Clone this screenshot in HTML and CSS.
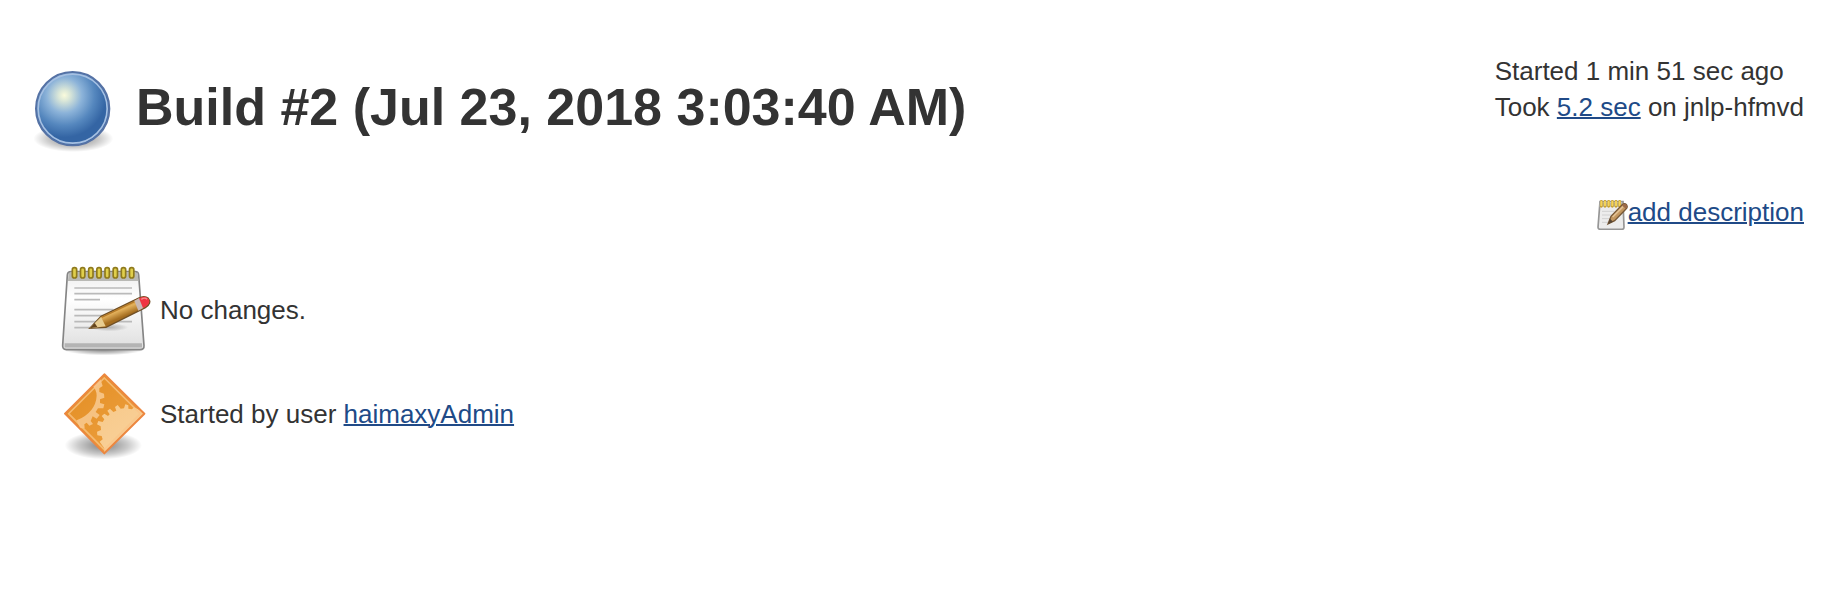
FILE: index.html
```html
<!DOCTYPE html>
<html lang="en">
<head>
<meta charset="utf-8">
<title>Build #2</title>
<link rel="stylesheet" href="styles.css">
</head>
<body>
<main class="page">
  <header class="header">
    <div class="title">
      <svg class="ball" viewBox="12 15 288 288" aria-hidden="true">
        <defs>
          <radialGradient id="ballFill" gradientUnits="userSpaceOnUse" cx="133" cy="118" r="126">
            <stop offset="0" stop-color="#fafbdc"/>
            <stop offset=".13" stop-color="#dce8d8"/>
            <stop offset=".42" stop-color="#8cb3d9"/>
            <stop offset=".72" stop-color="#5587be"/>
            <stop offset="1" stop-color="#3465a4"/>
          </radialGradient>
          <radialGradient id="shade">
            <stop offset="0" stop-color="#000" stop-opacity=".5"/>
            <stop offset=".65" stop-color="#000" stop-opacity=".2"/>
            <stop offset="1" stop-color="#000" stop-opacity="0"/>
          </radialGradient>
        </defs>
        <ellipse cx="160" cy="248" rx="120" ry="40" fill="url(#shade)"/>
        <circle cx="158" cy="158" r="110" fill="url(#ballFill)" stroke="#5572a5" stroke-width="6"/>
        <circle cx="158" cy="158" r="103.500" fill="none" stroke="#a6c0e2" stroke-width="5"/>
      </svg>
      <h1 class="heading">Build #2 (Jul 23, 2018 3:03:40 AM)</h1>
    </div>
    <div class="timing">
      <div>Started 1 min 51 sec ago</div>
      <div>Took <a class="link" href="#">5.2 sec</a> on jnlp-hfmvd</div>
    </div>
  </header>
  <div class="description">
    <svg class="edit" viewBox="48 39 96 96" aria-hidden="true">
      <path d="M60 50H129L132 127Q132 133 126 133H61Q54 133 54 127Z" fill="#ececec" stroke="#969696" stroke-width="5"/>
      <path d="M59 54H130V65H58Z" fill="#b8b3a0"/>
      <path d="M66 79H103M66 90H98M66 101H90M66 112H85" stroke="#d0d0d0" stroke-width="3"/>
      <path d="M64 64V49M75 64V49M86 64V49M97 64V49M108 64V49M119 64V49" stroke="#c69d28" stroke-width="8" stroke-linecap="round"/>
      <path d="M64 61V50M75 61V50M86 61V50M97 61V50M108 61V50M119 61V50" stroke="#f3d35b" stroke-width="6" stroke-linecap="round"/>
      <path d="M84 117L93 94L128 58Q135 53 140 60Q144 67 138 72L104 107Z" fill="#c39760" stroke="#765736" stroke-width="4"/>
      <path d="M98 96L129 65" stroke="#e3c294" stroke-width="5"/>
      <path d="M84 117L90 101L99 110Z" fill="#574735"/>
      <path d="M126 61L130 57Q140 54 142 65L137 71Z" fill="#9b6a48"/>
    </svg><a class="link" href="#">add description</a>
  </div>
  <section class="summary">
    <div class="row">
      <svg class="icon" viewBox="18 9 288 288" aria-hidden="true">
        <defs>
          <linearGradient id="paper" x2="0" y2="1">
            <stop offset="0" stop-color="#ededed"/>
            <stop offset=".35" stop-color="#fff"/>
            <stop offset="1" stop-color="#dedede"/>
          </linearGradient>
          <linearGradient id="wood" gradientUnits="userSpaceOnUse" x1="190" y1="152" x2="205" y2="188">
            <stop offset="0" stop-color="#b97b22"/>
            <stop offset=".45" stop-color="#e3b15c"/>
            <stop offset="1" stop-color="#a46d20"/>
          </linearGradient>
        </defs>
        <ellipse cx="160" cy="280" rx="122" ry="18" fill="url(#shade)"/>
        <path d="M63 47H256Q265 47 266 57L282 269Q283 281 270 281H49Q37 281 38 268L52 57Q53 47 63 47Z" fill="url(#paper)" stroke="#858585" stroke-width="5"/>
        <path d="M56 50H263L265 75H54Z" fill="#b9b9b5"/>
        <path d="M44 268H276" stroke="#b4b4b4" stroke-width="13"/>
        <path d="M73 96H246M73 113H246M73 131H150M73 161H190M73 179H168M73 197H246M73 215H125" stroke="#bababa" stroke-width="5"/>
        <ellipse cx="178" cy="214" rx="57" ry="12" fill="url(#shade)" opacity=".5"/>
        <g fill="#e0cf4c" stroke="#8f7a1c" stroke-width="5">
          <rect x="67" y="35" width="13" height="31" rx="6"/>
          <rect x="91.500" y="35" width="13" height="31" rx="6"/>
          <rect x="116" y="35" width="13" height="31" rx="6"/>
          <rect x="140.500" y="35" width="13" height="31" rx="6"/>
          <rect x="165" y="35" width="13" height="31" rx="6"/>
          <rect x="189.500" y="35" width="13" height="31" rx="6"/>
          <rect x="214" y="35" width="13" height="31" rx="6"/>
          <rect x="238.500" y="35" width="13" height="31" rx="6"/>
        </g>
        <path d="M119 217L153 181L258 130Q282 115 295 127Q307 141 286 155L168 214Z" fill="url(#wood)" stroke="#705026" stroke-width="4"/>
        <path d="M155 184L253 137" stroke="#b87c28" stroke-width="4"/>
        <path d="M119 217L153 183L167 211Z" fill="#e8cd91"/>
        <path d="M119 217L134 201L142 213Z" fill="#65451e"/>
        <path d="M253 134L269 125L281 155L265 164Z" fill="#c8b9b5"/>
        <path d="M267 127Q286 116 296 129Q303 141 287 152L279 156Z" fill="#ef3542"/>
        <path d="M274 130Q284 123 291 130" fill="none" stroke="#fa8b8e" stroke-width="4"/>
      </svg>
      <span class="row-text">No changes.</span>
    </div>
    <div class="row">
      <svg class="icon" viewBox="18 6 288 288" aria-hidden="true">
        <defs>
          <linearGradient id="orange" x2="1" y2="1">
            <stop offset="0" stop-color="#e28c20"/>
            <stop offset="1" stop-color="#efa345"/>
          </linearGradient>
          <linearGradient id="gear" x2=".7" y2="1">
            <stop offset="0" stop-color="#f7c98a"/>
            <stop offset="1" stop-color="#f9d19a"/>
          </linearGradient>
          <clipPath id="diamond"><path d="M163 40L283 158L163 277L45 158Z"/></clipPath>
        </defs>
        <ellipse cx="160" cy="253" rx="116" ry="42" fill="url(#shade)"/>
        <path d="M163 40L283 158L163 277L45 158Z" fill="url(#orange)"/>
        <g clip-path="url(#diamond)">
          <path d="M128 75L150 50L158 75L148 82L148 93L162 98L163 110L150 115L150 126L163 130L160 142L144 142L137 153L149 162L140 173L128 166L122 180L129 189L118 194L110 185L103 190L104 202L90 202L80 178Q137 154 140 104Q140 87 128 75Z" fill="#f6c282"/>
          <path d="M163 262L149 242L158 235L155 225L142 223L141 212L153 207L152 196L141 190L145 180L158 183L163 175L155 165L163 158L174 165L179 160L172 149L180 143L190 153L199 149L195 138L203 132L212 143L222 142L226 130L235 133L235 143L246 145L252 139L290 158L163 280Z" fill="url(#gear)"/>
          <path d="M163 51L271 158L163 266L56 158Z" fill="none" stroke="#fac488" stroke-width="5" opacity=".75"/>
        </g>
        <path d="M163 40L283 158L163 277L45 158Z" fill="none" stroke="#ec8740" stroke-width="6" stroke-linejoin="round"/>
      </svg>
      <span class="row-text">Started by user <a class="link" href="#">haimaxyAdmin</a></span>
    </div>
  </section>
</main>
</body>
</html>
```
FILE: styles.css
```css
body {
  margin: 0;
  background: #fff;
  color: #333;
  font: 26px/36px "Liberation Sans", Arial, sans-serif;
}
.page {
  box-sizing: border-box;
  height: 600px;
  padding: 53px 20px 0 24px;
}
.header {
  display: flex;
  justify-content: space-between;
  align-items: flex-start;
  height: 141px;
}
.title {
  display: flex;
  align-items: flex-start;
  gap: 16px;
  padding-top: 8px;
}
.ball,
.edit,
.icon {
  filter: blur(0.6px);
}
.ball {
  width: 96px;
  height: 96px;
}
.heading {
  margin: 16px 0 0;
  font-size: 52px;
  line-height: 60px;
  white-space: nowrap;
}
.link {
  color: #204a87;
  text-decoration: underline;
  text-decoration-thickness: 2px;
}
.description {
  display: flex;
  justify-content: flex-end;
  height: 65px;
}
.edit {
  width: 32px;
  height: 32px;
  margin-top: 4px;
}
.summary {
  display: flex;
  flex-direction: column;
  gap: 8px;
  padding-left: 32px;
}
.row {
  display: flex;
  align-items: center;
  gap: 8px;
  height: 96px;
}
.row-text {
  padding-top: 6px;
}
.icon {
  width: 96px;
  height: 96px;
}
```
